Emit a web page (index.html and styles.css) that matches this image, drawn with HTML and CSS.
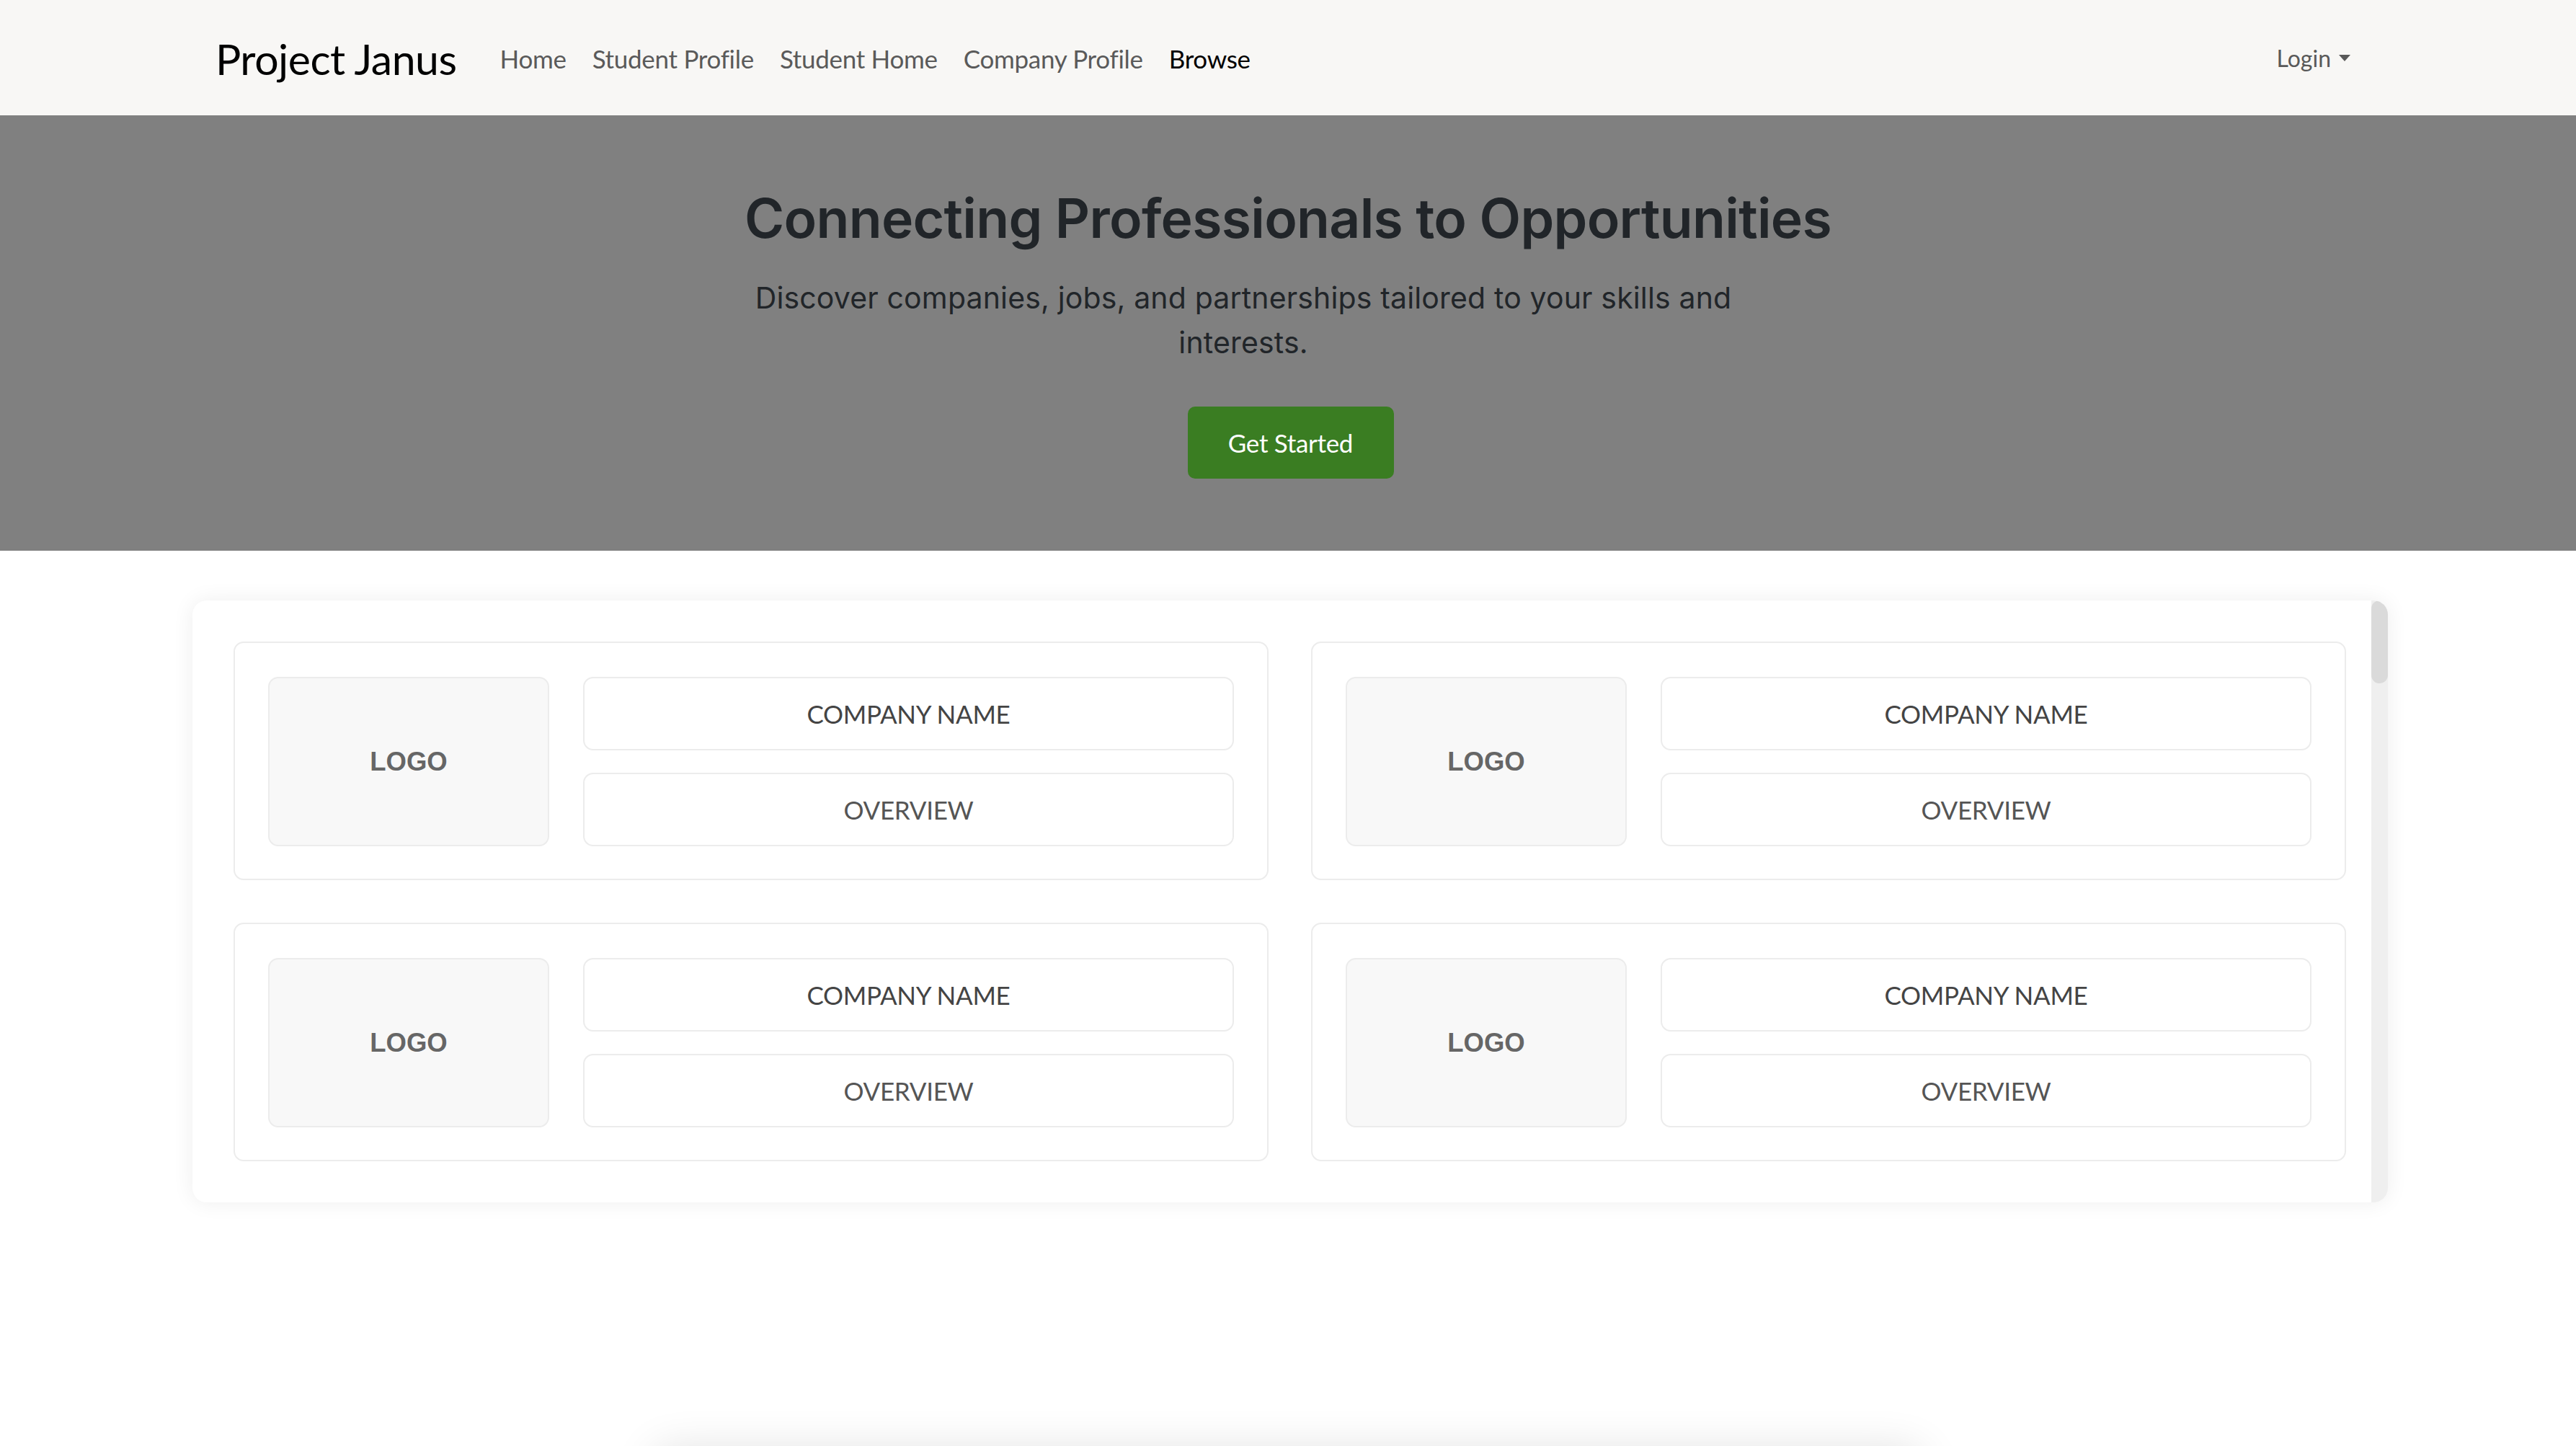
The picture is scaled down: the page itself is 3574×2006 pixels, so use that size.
FILE: index.html
```html
<!DOCTYPE html>
<html lang="en">
<head>
<meta charset="utf-8">
<title>Project Janus</title>
<link rel="stylesheet" href="styles.css">
</head>
<body>
<header class="navbar">
  <div class="nav-inner">
    <a class="brand" href="#">Project Janus</a>
    <nav class="nav-links">
      <a class="nav-link" href="#">Home</a>
      <a class="nav-link" href="#">Student Profile</a>
      <a class="nav-link" href="#">Student Home</a>
      <a class="nav-link" href="#">Company Profile</a>
      <a class="nav-link active" href="#">Browse</a>
    </nav>
    <a class="login" href="#">Login<span class="caret"></span></a>
  </div>
</header>

<section class="hero">
  <h1 class="hero-title">Connecting Professionals to Opportunities</h1>
  <p class="hero-lead">Discover companies, jobs, and partnerships tailored to your skills and interests.</p>
  <a class="btn-start" href="#">Get Started</a>
</section>

<main class="browse">
  <div class="browse-scroll">
    <div class="card-grid">
      <div class="company-card">
        <div class="logo-box">LOGO</div>
        <div class="info-col">
          <div class="info-box name">COMPANY NAME</div>
          <div class="info-box overview">OVERVIEW</div>
        </div>
      </div>
      <div class="company-card">
        <div class="logo-box">LOGO</div>
        <div class="info-col">
          <div class="info-box name">COMPANY NAME</div>
          <div class="info-box overview">OVERVIEW</div>
        </div>
      </div>
      <div class="company-card">
        <div class="logo-box">LOGO</div>
        <div class="info-col">
          <div class="info-box name">COMPANY NAME</div>
          <div class="info-box overview">OVERVIEW</div>
        </div>
      </div>
      <div class="company-card">
        <div class="logo-box">LOGO</div>
        <div class="info-col">
          <div class="info-box name">COMPANY NAME</div>
          <div class="info-box overview">OVERVIEW</div>
        </div>
      </div>
    </div>
  </div>
  <div class="scrollbar"><div class="thumb"></div></div>
</main>

<section class="lower-panel"></section>
</body>
</html>
```

FILE: styles.css
```css
* { box-sizing: border-box; }

html, body {
  margin: 0;
  padding: 0;
  background: #ffffff;
}

body {
  font-family: "Lato", "Open Sans", sans-serif;
  color: #212529;
  padding-bottom: 200px;
}

a { text-decoration: none; }

/* ---------- Navbar ---------- */
.navbar {
  background: #f8f7f5;
  height: 160px;
}

.nav-inner {
  height: 100%;
  display: flex;
  align-items: center;
  padding: 0 295px 0 299px;
}

.brand {
  font-family: "Lato", sans-serif;
  font-size: 59px;
  color: #000;
  letter-spacing: -0.5px;
  margin-right: 42px;
  line-height: 1;
  padding-top: 2px;
}

.nav-links {
  display: flex;
  align-items: center;
  padding-top: 2px;
}

.nav-link {
  font-size: 35px;
  color: #5a5a5a;
  padding: 0 18px;
  letter-spacing: -0.3px;
}

.nav-link.active {
  color: #000;
}

.login {
  margin-left: auto;
  font-size: 32px;
  color: #595959;
  padding: 0 18px;
  display: flex;
  align-items: center;
}

.caret {
  display: inline-block;
  margin-left: 11px;
  width: 0;
  height: 0;
  border-left: 8px solid transparent;
  border-right: 8px solid transparent;
  border-top: 9px solid #595959;
}

/* ---------- Hero ---------- */
.hero {
  background: #808080;
  padding: 98px 0 100px;
  text-align: center;
}

.hero-title {
  margin: 0;
  font-family: "Inter", "Liberation Sans", sans-serif;
  font-weight: 600;
  font-size: 75px;
  line-height: 1.2;
  color: #212529;
  letter-spacing: -0.7px;
}

.hero-lead {
  font-family: "Inter", "Liberation Sans", sans-serif;
  font-size: 41px;
  line-height: 1.5;
  color: #212529;
  letter-spacing: 0.15px;
  width: 1440px;
  margin: 35px 0 58px calc(50% - 782px);
}

.btn-start {
  display: inline-flex;
  align-items: center;
  justify-content: center;
  height: 100px;
  width: 286px;
  margin-left: 7px;
  background: #3a7d22;
  color: #ffffff;
  font-size: 35px;
  border-radius: 10px;
  letter-spacing: -0.3px;
}

/* ---------- Browse panel ---------- */
.browse {
  width: 3046px;
  height: 835px;
  margin: 69px 0 0 267px;
  background: #ffffff;
  border-radius: 20px;
  box-shadow: 0 0 30px rgba(0, 0, 0, 0.07);
  display: flex;
  overflow: hidden;
}

.browse-scroll {
  flex: 1;
  overflow: hidden;
  padding: 57px 35px 57px 57px;
}

.card-grid {
  display: grid;
  grid-template-columns: 1fr 1fr;
  column-gap: 59px;
  row-gap: 59px;
}

.company-card {
  border: 2px solid #ececec;
  border-radius: 14px;
  padding: 47px 46px 46px;
  display: grid;
  grid-template-columns: 390px 1fr;
  column-gap: 47px;
  height: 331px;
}

.logo-box {
  background: #f8f8f8;
  border: 2px solid #ececec;
  border-radius: 14px;
  display: flex;
  align-items: center;
  justify-content: center;
  font-family: "Liberation Sans", Arial, sans-serif;
  font-weight: bold;
  font-size: 36.5px;
  color: #666666;
  height: 235px;
}

.info-col {
  display: flex;
  flex-direction: column;
  gap: 31px;
}

.info-box {
  height: 102px;
  border: 2px solid #ececec;
  border-radius: 14px;
  background: #ffffff;
  display: flex;
  align-items: center;
  justify-content: center;
  font-size: 35px;
  letter-spacing: -0.3px;
}

.info-box.name { color: #444444; }
.info-box.overview { color: #555555; }

.scrollbar {
  width: 23px;
  background: #efefef;
  flex-shrink: 0;
}

.thumb {
  height: 115px;
  background: #dadada;
  border-radius: 12px;
}

/* ---------- Lower panel (peeking below fold) ---------- */
.lower-panel {
  width: 1760px;
  height: 400px;
  margin: 342px auto 0;
  background: #ffffff;
  border-radius: 20px;
  box-shadow: 0 0 60px rgba(0, 0, 0, 0.12);
}
```
